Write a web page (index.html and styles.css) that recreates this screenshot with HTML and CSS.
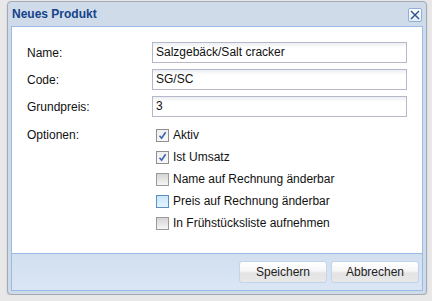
FILE: index.html
```html
<!DOCTYPE html>
<html>
<head>
<meta charset="utf-8">
<link rel="stylesheet" href="styles.css">
</head>
<body>
<div class="dialog">
  <div class="titlebar">
    <span class="title">Neues Produkt</span>
    <span class="close"><svg width="10" height="10" viewBox="0 0 10 10"><path d="M1 1L9 9M9 1L1 9" stroke="#2b4f8f" stroke-width="1.4" fill="none"/></svg></span>
  </div>
  <div class="panel">
    <div class="body">
      <div class="row">
        <label class="lbl">Name:</label>
        <div class="input">Salzgebäck/Salt cracker</div>
      </div>
      <div class="row">
        <label class="lbl">Code:</label>
        <div class="input">SG/SC</div>
      </div>
      <div class="row">
        <label class="lbl">Grundpreis:</label>
        <div class="input">3</div>
      </div>
      <div class="row options">
        <label class="lbl optlbl">Optionen:</label>
        <div class="checks">
          <div class="check"><span class="box checked"><svg width="9" height="9" viewBox="0 0 9 9"><path d="M1.5 4.8L3.6 7.2L7.6 1.2" stroke="#3a63b0" stroke-width="1.6" fill="none"/></svg></span>Aktiv</div>
          <div class="check"><span class="box checked"><svg width="9" height="9" viewBox="0 0 9 9"><path d="M1.5 4.8L3.6 7.2L7.6 1.2" stroke="#3a63b0" stroke-width="1.6" fill="none"/></svg></span>Ist Umsatz</div>
          <div class="check"><span class="box"></span>Name auf Rechnung änderbar</div>
          <div class="check"><span class="box hover"></span>Preis auf Rechnung änderbar</div>
          <div class="check"><span class="box"></span>In Frühstücksliste aufnehmen</div>
        </div>
      </div>
    </div>
    <div class="footer">
      <button class="btn">Speichern</button>
      <button class="btn">Abbrechen</button>
    </div>
  </div>
</div>
</body>
</html>
```
FILE: styles.css
```css
html, body {
  margin: 0;
  padding: 0;
  background: #e8e8e8;
  font-family: "Liberation Sans", Arial, sans-serif;
  font-size: 12px;
  color: #111;
}
.dialog {
  margin: 1px 0 0 7px;
  width: 420px;
  height: 294px;
  box-sizing: border-box;
  border: 1px solid #a2abb6;
  border-radius: 4px;
  background: #cfdbe8;
  padding: 0 3px 3px 3px;
  box-shadow: 0 1px 2px rgba(0,0,0,0.15);
  display: flex;
  flex-direction: column;
}
.titlebar {
  height: 24px;
  display: flex;
  align-items: center;
  justify-content: space-between;
  padding-left: 1px;
}
.title {
  font-weight: bold;
  color: #15428b;
  font-size: 12px;
  line-height: 14px;
  margin-top: -1px;
}
.close {
  width: 14px;
  height: 14px;
  box-sizing: border-box;
  border: 1px solid #8fb0d8;
  border-radius: 2px;
  background: linear-gradient(#ffffff, #e3ecf7);
  display: flex;
  align-items: center;
  justify-content: center;
  margin-right: 1px;
  margin-top: 2px;
}
.panel {
  flex: 1;
  border: 1px solid #99bbe8;
  display: flex;
  flex-direction: column;
}
.body {
  background: #fff;
  flex: 1;
  padding: 15px 15px 0 15px;
  display: flex;
  flex-direction: column;
  gap: 6px;
}
.row {
  display: flex;
  align-items: center;
}
.lbl {
  width: 125px;
  flex: none;
}
.input {
  width: 255px;
  height: 21px;
  box-sizing: border-box;
  border: 1px solid #b5b8c8;
  background: linear-gradient(#eceef2 0, #fff 5px, #fff 100%);
  padding-left: 3px;
  line-height: 19px;
}
.options {
  align-items: flex-start;
  margin-top: 1px;
}
.optlbl {
  line-height: 22px;
}
.checks {
  display: flex;
  flex-direction: column;
  padding-left: 4px;
}
.check {
  height: 22px;
  display: flex;
  align-items: center;
  gap: 4px;
}
.box {
  width: 13px;
  height: 13px;
  box-sizing: border-box;
  border: 1px solid #9a9a9a;
  background: linear-gradient(#d4d4d4, #f6f6f6);
  display: flex;
  align-items: center;
  justify-content: center;
}
.box.checked {
  background: linear-gradient(#eeeeee, #f8f8f8);
  border-color: #8f8f8f;
}
.box.hover {
  border-color: #5b8fbf;
  background: linear-gradient(#c9e6fb, #e5f4fe);
}
.footer {
  height: 36px;
  border-top: 1px solid #99bbe8;
  background: linear-gradient(#d2dfef, #dae6f4);
  display: flex;
  justify-content: flex-end;
  align-items: flex-start;
  padding: 7px 3px 0 0;
  gap: 4px;
  box-sizing: border-box;
  height: 37px;
}
.btn {
  width: 88px;
  height: 22px;
  border: 1px solid #c3d3ea;
  border-radius: 3px;
  background: linear-gradient(#ffffff 0, #f6f6f6 45%, #e4e4e4 55%, #e8e8e8 100%);
  font-family: "Liberation Sans", Arial, sans-serif;
  font-size: 12px;
  color: #222;
  padding: 0;
}
```
